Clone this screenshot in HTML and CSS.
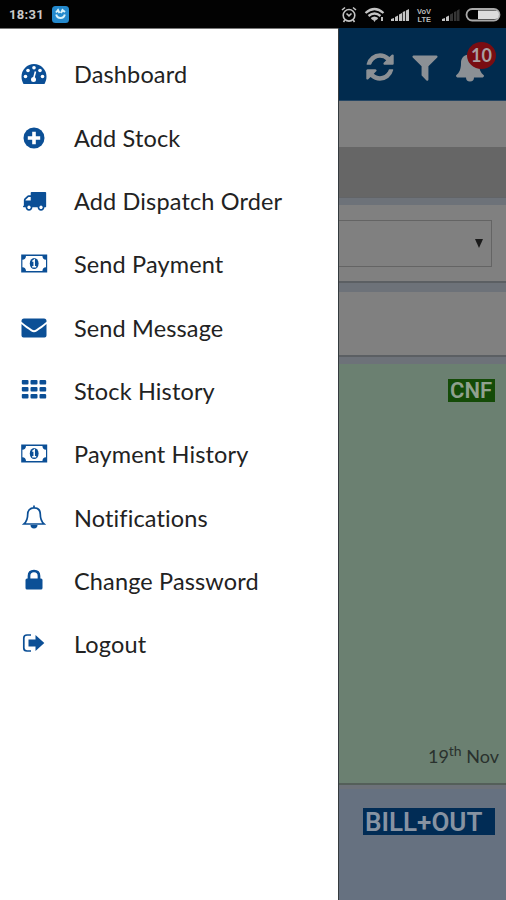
FILE: index.html
```html
<!DOCTYPE html>
<html lang="en">
<head>
<meta charset="utf-8">
<title>Dashboard</title>
<link rel="stylesheet" href="styles.css">
</head>
<body>
<div class="status">
  <span class="clock">18:31</span>
  <svg class="app" viewBox="0 0 17 17"><rect width="17" height="17" rx="3.5" fill="#2489cd"/><path d="M4 6.5l2-2.5 1.5 3M13 6l-2.5-2L9 7M4.2 8.500a4.400 4.400 0 0 0 8.600 0" fill="none" stroke="#d9f2fa" stroke-width="2"/></svg>
  <svg class="tray" viewBox="0 0 162 18">
    <g fill="none" stroke="#c4c4c4" stroke-width="1.6"><circle cx="8" cy="9.3" r="5.8"/><path d="M5.5 7.5l2.5 2.3 2.5-2.3M1 4l3-2.5M15 4l-3-2.500M3.800 14l-1.300 2M12.200 14l1.300 2"/></g>
    <g fill="none" stroke="#c4c4c4" stroke-width="2.3"><path d="M24.500 7q9-8 18 0M27.500 10q6-5 12 0M30.500 13q3-2.500 6 0"/></g><path d="M31.500 13h4l-2 3zM40 11h2v4h-2z" fill="#bbb"/>
    <path d="M50 15v-2l3-1v3zM54 15v-4l3-1.500v5.500zM58 15v-6.500l3-1.500v8zM61.700 15v-9l2.500-1v10zM65 15v-10.500l3-1.500v12z" fill="#c4c4c4"/>
    <g class="volte"><text x="76" y="7.500" textLength="14" lengthAdjust="spacingAndGlyphs">VoV</text><text x="76.500" y="15.800" textLength="13.500" lengthAdjust="spacingAndGlyphs">LTE</text></g>
    <path d="M101 15v-2l3-1v3zM105 15v-4l3-1.500v5.500z" fill="#c4c4c4"/><path d="M109 15v-6.500l3-1.500v8zM113 15v-9l2.500-1v10zM116 15v-10.500l2.500-1.500v12z" fill="#353535"/>
    <rect x="125.500" y="3" width="33" height="11.500" rx="5.700" fill="#000" stroke="#aaa" stroke-width="1.800"/><path d="M137 4.500h17q4 0 4 4.200t-4 4.300h-17z" fill="#dcdcdc"/>
  </svg>
</div>
<div class="main">
  <nav class="drawer">
    <a class="item"><svg viewBox="0 0 28 28"><path d="M1.500 16.500a12.500 12.500 0 0 1 25 0c0 3-.8 5.300-2 7.500h-21c-1.200-2.200-2-4.500-2-7.500z"/><g fill="#fff"><circle cx="5.500" cy="16.500" r="1.800"/><circle cx="8" cy="10.500" r="1.800"/><circle cx="14" cy="7.800" r="1.800"/><circle cx="20" cy="10.500" r="1.800"/><circle cx="22.500" cy="16.500" r="1.800"/><circle cx="13.500" cy="19.500" r="2.500"/></g><path d="M13.500 19l2-7.500" stroke="#fff" stroke-width="1.600"/></svg><span>Dashboard</span></a>
    <a class="item"><svg viewBox="0 0 28 28"><circle cx="14" cy="14" r="10.500"/><path d="M14 7.800v12.400M7.800 14h12.400" stroke="#fff" stroke-width="3.600"/></svg><span>Add Stock</span></a>
    <a class="item"><svg viewBox="-160 -110 2090 2090"><path d="M640 1408q0-52-38-90t-90-38-90 38-38 90 38 90 90 38 90-38 38-90zm-384-512h384v-256h-158q-13 0-22 9l-195 195q-9 9-9 22v30zm1280 512q0-52-38-90t-90-38-90 38-38 90 38 90 90 38 90-38 38-90zm256-1088v1024q0 15-4 26.500t-13.500 18.500-16.500 11.500-23.500 6-22.500 2-25.500 0-22.500-.5q0 106-75 181t-181 75-181-75-75-181h-384q0 106-75 181t-181 75-181-75-75-181h-64q-3 0-22.500.5t-25.500 0-22.500-2-23.500-6-16.500-11.500-13.500-18.500-4-26.500q0-26 19-45t45-19v-320q0-8-.5-35t0-38 2.500-34.500 6.500-37 14-30.500 22.500-30l198-198q19-19 50.500-32t58.500-13h160v-192q0-26 19-45t45-19h1024q26 0 45 19t19 45z"/></svg><span>Add Dispatch Order</span></a>
    <a class="item"><svg viewBox="0 0 28 28"><path fill-rule="evenodd" d="M1.200 4.500h26v18h-26zM6 5.900a4 4 0 0 1-3.600 3.800v7.600a4 4 0 0 1 3.600 3.800h16.400a4 4 0 0 1 3.600-3.800v-7.600a4 4 0 0 1-3.600-3.800z"/><ellipse cx="14.200" cy="13.500" rx="4.400" ry="5.500"/><path d="M12.400 11.500l1.800-1.500v6.500M12.200 16.800h4" fill="none" stroke="#fff" stroke-width="1.500"/></svg><span>Send Payment</span></a>
    <a class="item"><svg viewBox="0 0 28 28"><path d="M4 4.500h20a2.500 2.500 0 0 1 2.500 2.500v.8c-3.500 3.500-7.500 5.500-10.500 7.700q-2 1.400-4 0C9 13.300 5 11.300 1.500 7.800V7A2.500 2.500 0 0 1 4 4.500zM1.500 10c3 3 6.500 5 9.500 7.200q3 2 6 0c3-2.200 6.500-4.200 9.500-7.200v11.500a2 2 0 0 1-2 2h-21a2 2 0 0 1-2-2z"/></svg><span>Send Message</span></a>
    <a class="item"><svg viewBox="0 0 28 28"><path d="M3 3h4.500a1 1 0 0 1 1 1v2.500a1 1 0 0 1-1 1H3a1.200 1.200 0 0 1-1.200-1V4A1 1 0 0 1 3 3zM11.500 3h5a1 1 0 0 1 1 1v2.500a1 1 0 0 1-1 1h-5a1 1 0 0 1-1-1V4a1 1 0 0 1 1-1zM20.500 3H25a1.200 1.200 0 0 1 1.200 1v2.500a1 1 0 0 1-1.200 1h-4.500a1 1 0 0 1-1-1V4a1 1 0 0 1 1-1z" id="r"/><use href="#r" y="7"/><use href="#r" y="14"/></svg><span>Stock History</span></a>
    <a class="item"><svg viewBox="0 0 28 28"><path fill-rule="evenodd" d="M1.200 4.500h26v18h-26zM6 5.900a4 4 0 0 1-3.600 3.800v7.600a4 4 0 0 1 3.600 3.800h16.400a4 4 0 0 1 3.600-3.800v-7.600a4 4 0 0 1-3.600-3.800z"/><ellipse cx="14.200" cy="13.500" rx="4.400" ry="5.500"/><path d="M12.400 11.500l1.800-1.500v6.500M12.200 16.800h4" fill="none" stroke="#fff" stroke-width="1.500"/></svg><span>Payment History</span></a>
    <a class="item"><svg viewBox="0 0 28 28"><path d="M14 3.800c-4.300 0-6.300 3-6.300 6.500 0 5-1.300 7.500-3.700 9.700h20c-2.400-2.200-3.700-4.700-3.700-9.700 0-3.500-2-6.500-6.300-6.500zM14 4V1.500" fill="none" stroke="#0b4f96" stroke-width="1.700"/><path d="M10.500 21h7a3.500 3.500 0 0 1-7 0z"/></svg><span>Notifications</span></a>
    <a class="item"><svg viewBox="0 0 28 28"><path d="M7 11.500h14q1.500 0 1.500 1.500v8q0 1.500-1.500 1.500H7q-1.500 0-1.500-1.500v-8q0-1.500 1.500-1.500z"/><path d="M9 12V9q0-5 5-5t5 5v3" fill="none" stroke="#0b4f96" stroke-width="2.700"/></svg><span>Change Password</span></a>
    <a class="item"><svg viewBox="0 0 28 28"><path d="M11 5H7Q3.800 5 3.800 8v10q0 3 3.200 3h4" fill="none" stroke="#0b4f96" stroke-width="1.700"/><path d="M8.500 9.500h7V5l8.800 8-8.800 8v-4.500h-7z"/></svg><span>Logout</span></a>
  </nav>
  <div class="page">
    <header class="top">
      <svg viewBox="0 0 1792 1792"><path d="M1639 1056q0 5-1 7-64 268-268 434.500t-478 166.500q-146 0-282.500-55t-243.500-157l-129 129q-19 19-45 19t-45-19-19-45v-448q0-26 19-45t45-19h448q26 0 45 19t19 45-19 45l-137 137q71 66 161 102t187 36q134 0 250-65t186-179q11-17 53-117 8-23 30-23h192q13 0 22.500 9.500t9.500 22.500zm25-800v448q0 26-19 45t-45 19h-448q-26 0-45-19t-19-45 19-45l138-138q-148-137-349-137-134 0-250 65t-186 179q-11 17-53 117-8 23-30 23h-199q-13 0-22.500-9.500t-9.500-22.500v-7q65-268 270-434.500t480-166.500q146 0 284 55.500t245 156.500l130-129q19-19 45-19t45 19 19 45z"/></svg>
      <svg viewBox="0 0 1792 1792"><path d="M1595 295q17 41-14 70l-493 493v742q0 42-39 59-13 5-25 5-27 0-45-19l-256-256q-19-19-19-45v-486l-493-493q-31-29-14-70 17-39 59-39h1280q42 0 59 39z"/></svg>
      <div class="bell"><svg viewBox="0 0 32 32"><path d="M16 1.500q2 0 2 2c4.500.7 7 4 7 8.500 0 6 1.500 9.500 5 12.500 0 1.500-1 2-2 2h-8a4 4 0 0 1-8 0H4c-1 0-2-.5-2-2 3.500-3 5-6.500 5-12.500 0-4.500 2.500-7.800 7-8.500q0-2 2-2z"/></svg><b class="badge">10</b></div>
    </header>
    <div class="blank"></div>
    <div class="strip"></div>
    <div class="card filter"><div class="select"><svg viewBox="0 0 8 9"><path d="M0 0h8L4 9z"/></svg></div></div>
    <div class="card empty"></div>
    <div class="entry green"><span class="tag cnf">CNF</span><span class="date">19<sup>th</sup> Nov</span></div>
    <div class="entry blue"><span class="tag bill">BILL+OUT</span></div>
  </div>
</div>
</body>
</html>
```
FILE: styles.css
```css
* { box-sizing: border-box; }
body { margin: 0; width: 506px; height: 900px; overflow: hidden; display: flex; flex-direction: column; font-family: Lato, sans-serif; background: #fff; }
svg { display: block; flex: none; }
.status { height: 28px; flex: none; background: #020202; display: flex; align-items: center; padding: 1px 3px 0 9px; color: #c9c9c9; }
.clock { font: bold 13px Roboto, sans-serif; width: 35px; letter-spacing: .3px; }
.app { width: 17px; height: 17px; margin-left: 8px; }
.tray { width: 162px; height: 18px; margin-left: auto; }
.volte { font: bold 7px "Liberation Sans", sans-serif; fill: #bbb; }
.main { display: flex; flex: 1; min-height: 0; }
.drawer { width: 338px; flex: none; background: #fff; padding-top: 13.8px; border-top: 1px solid #777; }
.item { display: flex; align-items: center; height: 63.3px; padding-left: 20px; gap: 26px; font-size: 23.5px; letter-spacing: .14px; color: #222; white-space: nowrap; }
.item svg { width: 28px; height: 28px; fill: #0b4f96; }
.page { flex: 1; min-width: 0; background: #6d7279; border-left: 1px solid #343a3e; display: flex; flex-direction: column; }
.top { height: 73px; flex: none; background: #012b4e; display: flex; align-items: center; padding: 6px 0 0 25px; gap: 13px; border-bottom: 1px solid #254664; }
.top svg { width: 32px; height: 32px; fill: #8b9095; }
.bell { position: relative; }
.badge { position: absolute; left: 13px; top: -9px; width: 29px; height: 27px; border-radius: 50%; background: #790d12; color: #a9a0a2; font-size: 18px; line-height: 26px; text-align: center; }
.blank { height: 46px; background: #808080; }
.strip { height: 51px; background: #666; border-bottom: 1px solid #626467; }
.card { background: #808080; border-bottom: 2px solid #5b5f63; }
.filter { height: 78px; margin-top: 7px; padding: 15px 14px 0 0; }
.select { height: 47px; border: 1px solid #646464; border-left: 0; display: flex; align-items: center; justify-content: flex-end; padding-right: 8px; }
.select svg { width: 8px; height: 9px; fill: #1b1b1b; }
.empty { height: 65px; margin-top: 9px; }
.entry { display: flex; flex-direction: column; align-items: flex-end; }
.green { height: 421px; margin-top: 7px; background: #6b8071; border-bottom: 2px solid #545f59; padding: 15px 11px 0 0; }
.blue { flex: 1; margin-top: 4px; background: #667180; padding: 19px 11px 0 0; }
.tag { font: 600 22px/23px Roboto, sans-serif; white-space: nowrap; }
.cnf { width: 47px; height: 23px; padding-left: 2px; background: #144b07; color: #90a18e; }
.bill { width: 132px; height: 27px; line-height: 28px; font-size: 26px; padding-left: 2px; background: #012c55; color: #8793a2; }
.date { margin: auto -4px 15px 0; font-size: 18px; line-height: 24px; color: #29312d; white-space: nowrap; }
.date sup { font-size: 14px; line-height: 0; vertical-align: 7px; }
```
